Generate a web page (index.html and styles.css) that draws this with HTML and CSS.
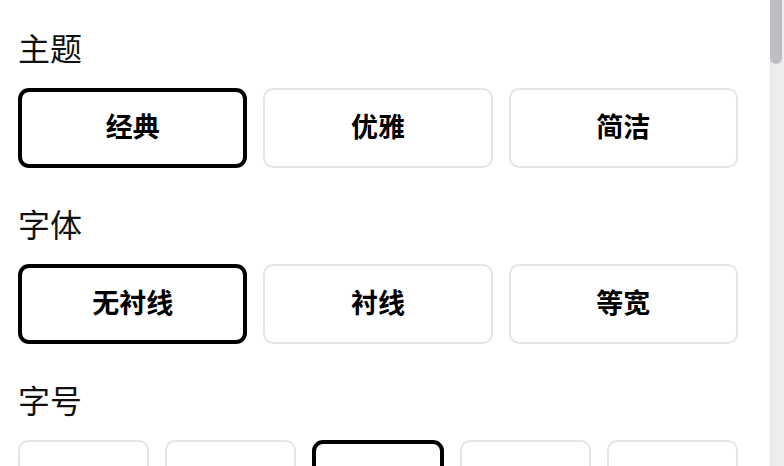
FILE: index.html
```html
<!DOCTYPE html>
<html lang="zh">
<head>
<meta charset="utf-8">
<link rel="stylesheet" href="styles.css">
</head>
<body>
<div class="page">
  <main class="settings">
    <section class="group">
      <h2 class="group-title">主题</h2>
      <div class="options cols-3">
        <button class="opt selected">经典</button>
        <button class="opt">优雅</button>
        <button class="opt">简洁</button>
      </div>
    </section>
    <section class="group">
      <h2 class="group-title">字体</h2>
      <div class="options cols-3">
        <button class="opt selected">无衬线</button>
        <button class="opt">衬线</button>
        <button class="opt">等宽</button>
      </div>
    </section>
    <section class="group">
      <h2 class="group-title">字号</h2>
      <div class="options cols-5">
        <button class="opt"></button>
        <button class="opt"></button>
        <button class="opt selected"></button>
        <button class="opt"></button>
        <button class="opt"></button>
      </div>
    </section>
  </main>
  <div class="scrollbar"><div class="thumb"></div></div>
</div>
</body>
</html>
```
FILE: styles.css
```css
* { box-sizing: border-box; }
html, body {
  margin: 0;
  height: 100%;
  overflow: hidden;
  background: #fff;
}
body {
  font-family: "Noto Sans CJK SC", "Noto Sans", sans-serif;
  color: #111;
}
.page {
  display: flex;
  height: 466px;
}
.settings {
  flex: 1;
  padding: 29px 32px 0 18px;
  display: flex;
  flex-direction: column;
  gap: 37px;
}
.group-title {
  margin: 0 0 22px;
  font-size: 32px;
  line-height: 37px;
  font-weight: 400;
  color: #111;
}
.options {
  display: grid;
  gap: 16px;
}
.cols-3 { grid-template-columns: repeat(3, 1fr); }
.cols-5 { grid-template-columns: repeat(5, 1fr); }
.opt {
  height: 80px;
  border: 2px solid #e5e5e5;
  border-radius: 10px;
  background: #fff;
  font-family: inherit;
  font-size: 27px;
  font-weight: 700;
  color: #000;
  padding: 0 0 6px;
}
.opt.selected {
  border: 4px solid #000;
  border-radius: 11px;
}
.scrollbar {
  width: 14px;
  flex: none;
  background: #ededed;
  border-left: 1px solid #e6e6e6;
}
.thumb {
  height: 64px;
  width: 12px;
  margin-left: -1px;
  background: #bdbec3;
  border-radius: 0 0 6px 6px;
}
```
